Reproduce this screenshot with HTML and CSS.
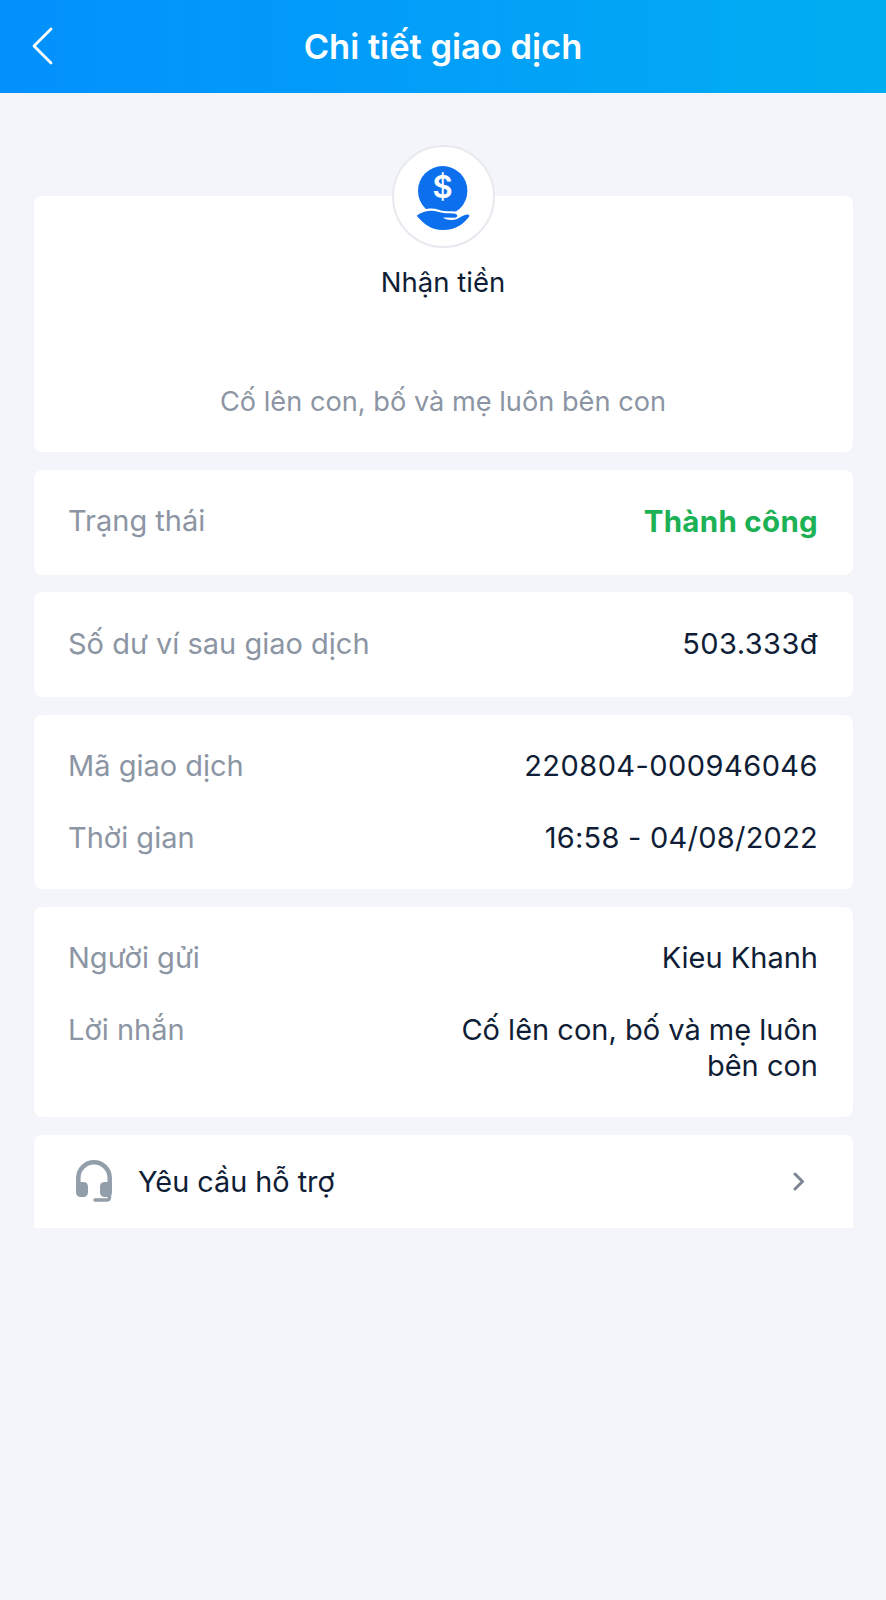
FILE: index.html
```html
<!DOCTYPE html>
<html lang="vi">
<head>
<meta charset="utf-8">
<title>Chi tiết giao dịch</title>
<link rel="stylesheet" href="styles.css">
</head>
<body>
<header class="topbar">
  <svg class="back" width="24" height="38" viewBox="0 0 24 38"><path d="M20 2 L3 19 L20 36" fill="none" stroke="#fff" stroke-width="2.800" stroke-linecap="round" stroke-linejoin="round"/></svg>
  <h1 class="title">Chi tiết giao dịch</h1>
</header>
<main class="content">
  <section class="card hero">
    <div class="badge">
      <svg class="badge-icon" width="54" height="65" viewBox="0 0 54 65">
        <circle cx="26.700" cy="24.700" r="24.700" fill="#0c6fee"/>
        <text class="dollar" x="26.700" y="31.500" text-anchor="middle">$</text>
        <path d="M-2 49 C5 44 10 42.500 15.700 42.500 C20 42.500 24 44.500 28 45 C33 45.500 38 45 42 46 L54 47 V54 H-2 Z" fill="#fff"/>
        <path d="M0.700 49.700 C5 46.500 10 44.700 15.700 44.700 C20 44.700 24 46.500 28 47 C32 47.500 38 47 40 48 C42 49.500 41.500 51.500 39 51.700 L27 51.500 C31 54.500 37 54.500 41 53 C45 51 49 48 52 48.500 C54 49 53.500 50.500 52 52 C47 58 40 64 27 64 C15 64 8 58 0.700 49.700 Z" fill="#0c6fee"/>
      </svg>
    </div>
    <div class="hero-title">Nhận tiền</div>
    <div class="hero-note">Cố lên con, bố và mẹ luôn bên con</div>
  </section>
  <section class="card rows">
    <div class="row"><span class="label">Trạng thái</span><span class="value success">Thành công</span></div>
  </section>
  <section class="card rows">
    <div class="row"><span class="label">Số dư ví sau giao dịch</span><span class="value numeric">503.333đ</span></div>
  </section>
  <section class="card rows">
    <div class="row"><span class="label">Mã giao dịch</span><span class="value numeric">220804-000946046</span></div>
    <div class="row"><span class="label">Thời gian</span><span class="value time">16:58 - 04/08/2022</span></div>
  </section>
  <section class="card rows">
    <div class="row"><span class="label">Người gửi</span><span class="value">Kieu Khanh</span></div>
    <div class="row"><span class="label">Lời nhắn</span><span class="value message">Cố lên con, bố và mẹ luôn bên con</span></div>
  </section>
  <section class="card support">
    <svg class="headset" width="36" height="42" viewBox="0 0 36 42">
      <path d="M2.300 26 V18 A15.700 15.700 0 0 1 33.700 18 V26" fill="none" stroke="#939eab" stroke-width="4.500"/>
      <rect x="0" y="22" width="12" height="15" rx="4.500" fill="#939eab"/>
      <rect x="24" y="22" width="12" height="15" rx="4.500" fill="#939eab"/>
      <path d="M33.500 35 V37 Q33.500 40 30.500 40 H19" fill="none" stroke="#939eab" stroke-width="3.500" stroke-linecap="round"/>
    </svg>
    <span class="support-text">Yêu cầu hỗ trợ</span>
    <svg class="chevron" width="12" height="19" viewBox="0 0 12 19"><path d="M2 2 L9.500 9.500 L2 17" fill="none" stroke="#7d8694" stroke-width="3" stroke-linecap="round" stroke-linejoin="round"/></svg>
  </section>
</main>
</body>
</html>
```
FILE: styles.css
```css
* { box-sizing: border-box; }
html, body { margin: 0; padding: 0; }
body {
  width: 886px;
  height: 1600px;
  overflow: hidden;
  background: #f4f5fa;
  font-family: Inter, "Noto Sans", sans-serif;
  font-size: 29px;
  color: #0f1e36;
}
.topbar {
  height: 93px;
  display: flex;
  align-items: center;
  justify-content: center;
  background: linear-gradient(90deg, #0390fd 0%, #02a5f6 70%, #01aef0 100%);
  position: relative;
}
.back { position: absolute; left: 31px; top: 27px; }
.title {
  margin: 0;
  font-size: 34.500px;
  font-weight: 600;
  color: #fff;
}
.content {
  padding: 103px 33.500px 0;
  display: flex;
  flex-direction: column;
  gap: 17.500px;
}
.card { background: #fff; border-radius: 8px; }
.hero {
  height: 256px;
  display: flex;
  flex-direction: column;
  align-items: center;
  position: relative;
  font-size: 27.200px;
}
.badge {
  position: absolute;
  top: -51px;
  left: 358px;
  width: 103px;
  height: 103px;
  border-radius: 50%;
  background: #fff;
  border: 2px solid #e8e9ee;
  display: flex;
  align-items: center;
  justify-content: center;
}
.badge-icon { margin-top: 3px; overflow: visible; }
.dollar { font-family: Inter, sans-serif; font-size: 31px; font-weight: 600; fill: #fff; }
.hero-title { margin-top: 69px; line-height: 34px; font-size: 27.500px; }
.hero-note { margin-top: 86px; line-height: 34px; color: #8c95a3; }
.rows {
  padding: 33.500px 34.500px;
  display: flex;
  flex-direction: column;
  gap: 35.500px;
  min-height: 105px;
}
.row {
  display: flex;
  justify-content: space-between;
  line-height: 36px;
}
.label { color: #8c95a3; }
.value { text-align: right; }
.numeric { letter-spacing: 0.450px; }
.time { letter-spacing: 0.250px; }
.success { color: #1db155; font-weight: 700; font-size: 29.500px; letter-spacing: 0.300px; }
.message { width: 380px; }
.support {
  height: 93px;
  display: flex;
  align-items: center;
  padding: 0 48px 0 42.500px;
  border-radius: 8px 8px 0 0;
}
.support-text { margin-left: 26px; flex: 1; font-size: 28.800px; }
.headset { flex: none; }
.chevron { flex: none; }
```
